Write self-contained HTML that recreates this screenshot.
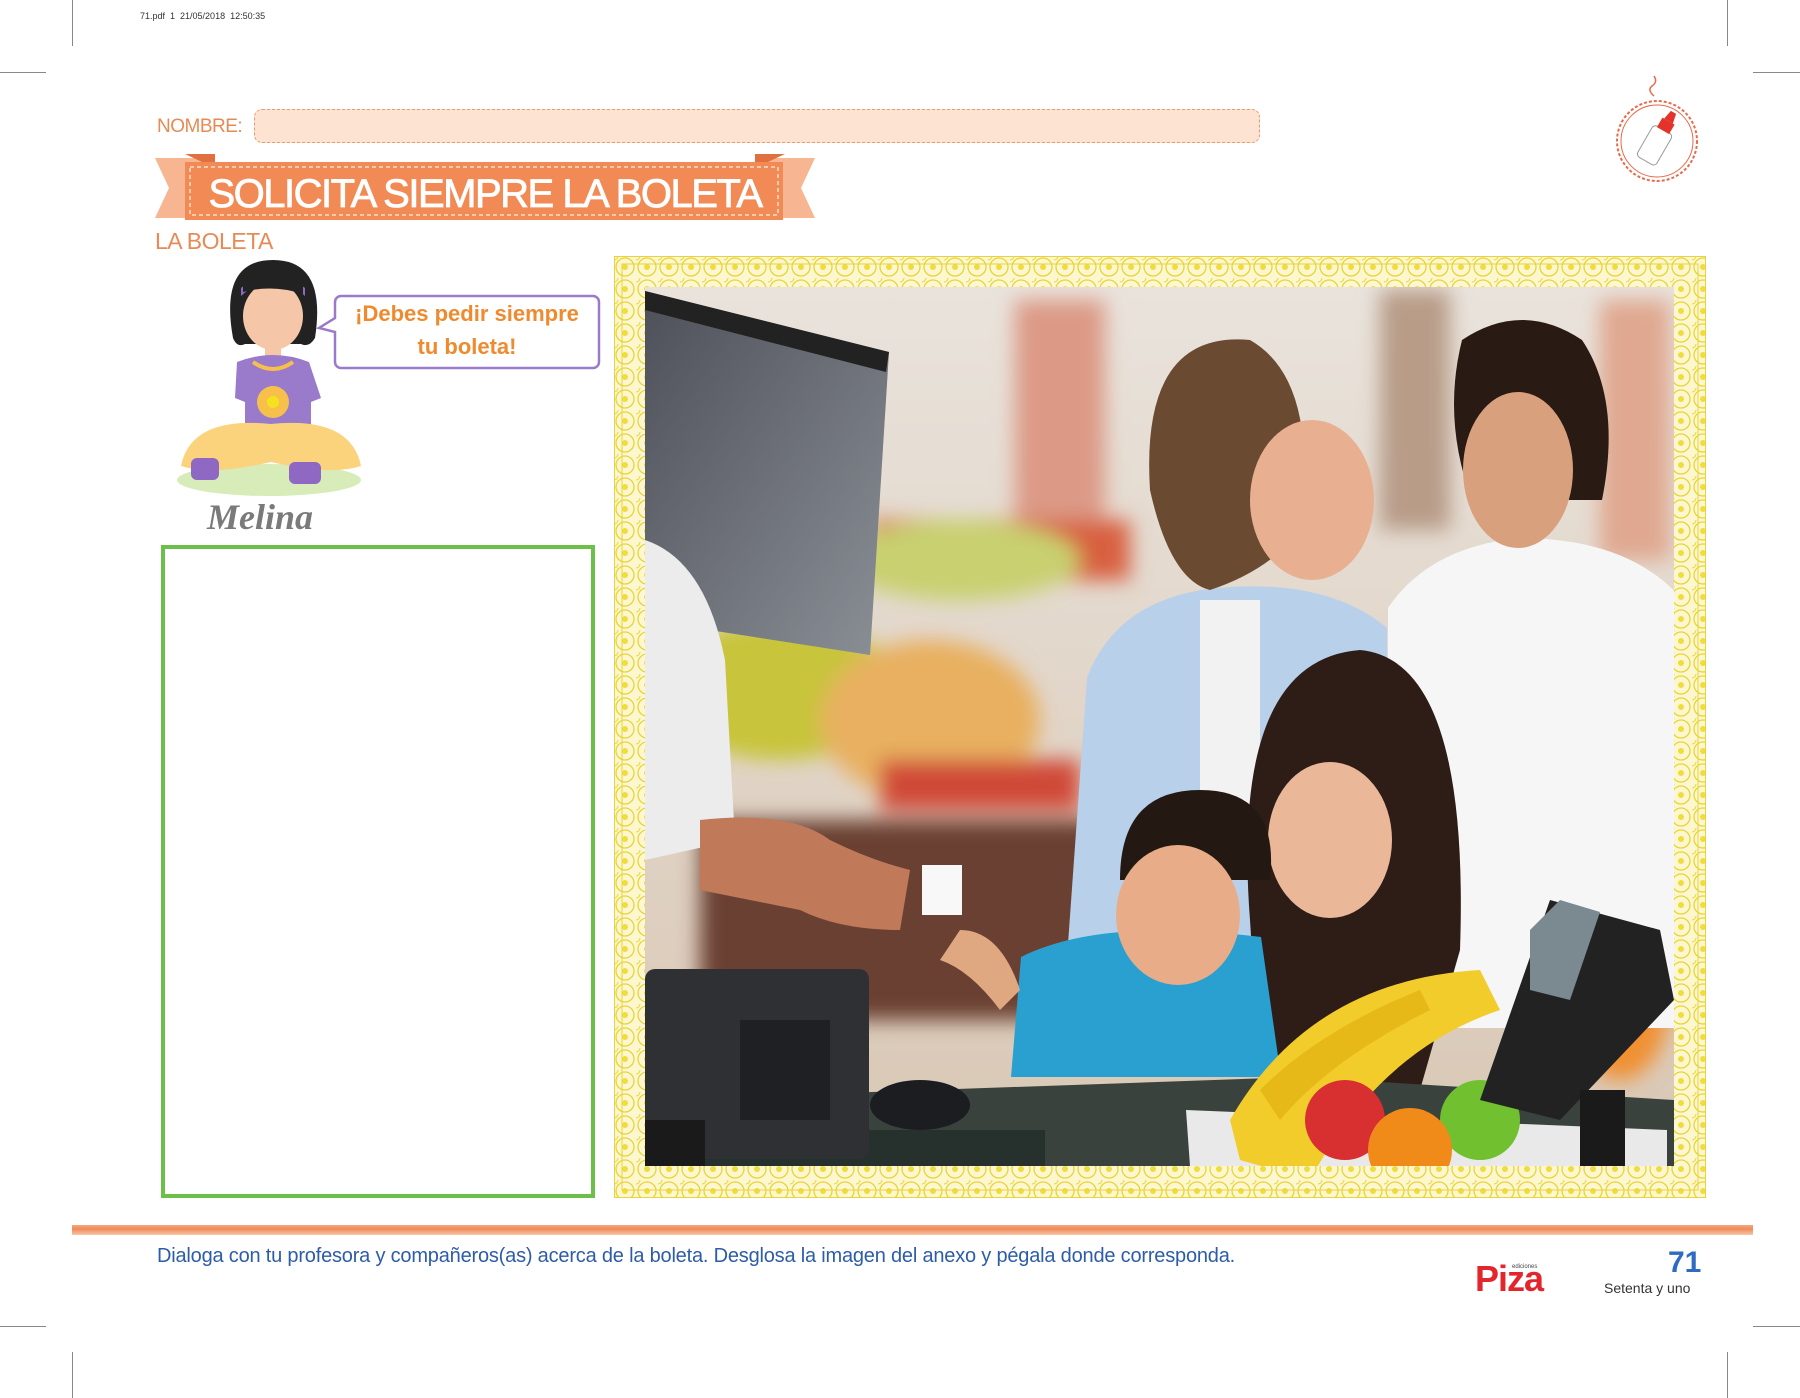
<!DOCTYPE html>
<html><head><meta charset="utf-8"><style>
*{margin:0;padding:0;box-sizing:border-box}
body{width:1800px;height:1398px;background:#fff;position:relative;overflow:hidden;font-family:"Liberation Sans","DejaVu Sans",sans-serif}
.a{position:absolute}
.cm{position:absolute;background:#888}
</style></head><body>
<div class="cm" style="left:72px;top:0;width:1px;height:46px"></div>
<div class="cm" style="left:0;top:72px;width:46px;height:1px"></div>
<div class="cm" style="left:1727px;top:0;width:1px;height:46px"></div>
<div class="cm" style="left:1753px;top:72px;width:47px;height:1px"></div>
<div class="cm" style="left:0;top:1326px;width:46px;height:1px"></div>
<div class="cm" style="left:72px;top:1352px;width:1px;height:46px"></div>
<div class="cm" style="left:1753px;top:1326px;width:47px;height:1px"></div>
<div class="cm" style="left:1727px;top:1352px;width:1px;height:46px"></div>
<div class="a" style="left:140px;top:11px;font-size:9px;color:#333">71.pdf&nbsp; 1&nbsp; 21/05/2018&nbsp; 12:50:35</div>

<div class="a" style="left:157px;top:116px;font-size:19px;color:#e88a55;letter-spacing:-0.5px">NOMBRE:</div>
<div class="a" style="left:254px;top:109px;width:1006px;height:34px;background:#fde4d2;border:1.5px dashed #eb9b6e;border-radius:8px"></div>

<svg class="a" style="left:155px;top:154px" width="660" height="68" viewBox="0 0 660 68">
<polygon points="0,0 58,0 58,60 0,60 14,30" fill="#f7b592" transform="translate(0,4)"/>
<polygon points="660,0 602,0 602,60 660,60 646,30" fill="#f7b592" transform="translate(0,4)"/>
<polygon points="30,0 60,0 60,14" fill="#e0703f"/>
<polygon points="630,0 600,0 600,14" fill="#e0703f"/>
<rect x="30" y="8" width="598" height="58" fill="#f28a55"/>
<rect x="35" y="13" width="588" height="48" fill="none" stroke="#fde0cc" stroke-width="1.5" stroke-dasharray="4 3"/>
<text x="330" y="53" text-anchor="middle" font-family="Liberation Sans, sans-serif" font-size="40" fill="#fff" stroke="#fff" stroke-width="0.8" letter-spacing="-1.5">SOLICITA SIEMPRE LA BOLETA</text>
</svg>
<div class="a" style="left:155px;top:228px;font-size:23px;color:#e88a55;letter-spacing:-0.5px">LA BOLETA</div>

<svg class="a" style="left:1610px;top:72px" width="96" height="116" viewBox="0 0 96 116">
<path d="M44 4 q4 6 -2 10 q-5 4 2 10" stroke="#e86a4a" fill="none" stroke-width="1.5"/>
<circle cx="47" cy="69" r="40" fill="#fff" stroke="#e86a4a" stroke-width="2" stroke-dasharray="3 2"/>
<circle cx="47" cy="69" r="36" fill="none" stroke="#e86a4a" stroke-width="1"/>
<g transform="rotate(30 47 69)"><rect x="36" y="56" width="22" height="36" rx="4" fill="#fff" stroke="#999"/><rect x="40" y="46" width="14" height="11" fill="#e3332a"/><polygon points="44,36 50,36 52,46 42,46" fill="#e3332a"/></g>
</svg>

<!-- girl -->
<svg class="a" style="left:161px;top:258px" width="220" height="245" viewBox="0 0 220 245">
<ellipse cx="108" cy="222" rx="92" ry="16" fill="#d7ecb8"/>
<path d="M72 80 q-14 -78 40 -78 q54 0 42 78 q-6 10 -14 6 l-56 0 q-8 4 -12 -6z" fill="#222"/>
<ellipse cx="112" cy="58" rx="30" ry="34" fill="#f6c6a8"/>
<path d="M80 38 q32 -30 64 0 l0 -8 q-32 -26 -64 0z" fill="#8e68c2"/>
<path d="M82 34 q30 -8 60 2 l0 -14 q-30 -18 -60 0z" fill="#222"/>
<path d="M104 88 l16 0 l0 16 l-16 0z" fill="#f6c6a8"/>
<path d="M76 104 q36 -14 72 0 l12 36 l-10 4 l0 50 l-66 0 l0 -50 l-10 -4z" fill="#9a7acb"/>
<path d="M92 104 q20 14 40 0" stroke="#f7c04a" stroke-width="4" fill="none"/>
<circle cx="112" cy="144" r="16" fill="#f7c04a"/><circle cx="112" cy="144" r="6" fill="#f5e11f"/>
<path d="M20 208 q10 -50 90 -42 q80 -8 90 42 q-30 10 -90 -4 q-60 14 -90 4z" fill="#fbd37d"/>
<rect x="30" y="200" width="28" height="22" rx="6" fill="#8e68c2"/>
<rect x="128" y="204" width="32" height="22" rx="6" fill="#8e68c2"/>
</svg>
<div class="a" style="left:207px;top:496px;font-family:'Liberation Serif',serif;font-style:italic;font-weight:bold;font-size:36px;color:#7a7a7a">Melina</div>
<svg class="a" style="left:316px;top:290px" width="286" height="80" viewBox="0 0 286 80">
<path d="M25 6 h252 a6 6 0 0 1 6 6 v60 a6 6 0 0 1 -6 6 h-252 a6 6 0 0 1 -6 -6 v-30 l-16 -4 l16 -10 v-16 a6 6 0 0 1 6 -6z" fill="#fff" stroke="#9b7bc9" stroke-width="2.5"/>
<text x="151" y="31" text-anchor="middle" font-family="Liberation Sans, sans-serif" font-weight="bold" font-size="22" fill="#ef8a2e">¡Debes pedir siempre</text>
<text x="151" y="64" text-anchor="middle" font-family="Liberation Sans, sans-serif" font-weight="bold" font-size="22" fill="#ef8a2e">tu boleta!</text>
</svg>

<div class="a" style="left:161px;top:545px;width:434px;height:653px;border:4px solid #6cc04a"></div>

<!-- frame -->
<svg class="a" style="left:614px;top:256px" width="1092" height="942" viewBox="0 0 1092 942">
<defs><pattern id="p" width="22" height="22" patternUnits="userSpaceOnUse">
<rect width="22" height="22" fill="#fdf7cf"/><circle cx="11" cy="11" r="9" fill="none" stroke="#e8d43a" stroke-width="1.3"/><circle cx="11" cy="11" r="3" fill="#f0dc40"/><circle cx="0" cy="0" r="4" fill="none" stroke="#e8d43a"/></pattern></defs>
<rect x="0" y="0" width="1092" height="942" fill="url(#p)" stroke="#e8d43a" stroke-width="2"/>
<rect x="8" y="8" width="1076" height="926" fill="none" stroke="#e8d43a"/>
</svg>

<!-- photo -->
<svg class="a" style="left:645px;top:287px" width="1029" height="879" viewBox="645 287 1029 879">
<defs>
<linearGradient id="bg" x1="0" y1="0" x2="0" y2="1"><stop offset="0" stop-color="#e9e3dc"/><stop offset="1" stop-color="#d9c7b4"/></linearGradient>
<linearGradient id="mon" x1="0" y1="0" x2="1" y2="1"><stop offset="0" stop-color="#4d5058"/><stop offset="1" stop-color="#8b8f96"/></linearGradient>
<filter id="bl"><feGaussianBlur stdDeviation="10"/></filter>
</defs>
<rect x="645" y="287" width="1029" height="879" fill="url(#bg)"/>
<g filter="url(#bl)">
<rect x="1015" y="300" width="90" height="260" fill="#dc9a86"/>
<rect x="1380" y="290" width="70" height="240" fill="#b89c88"/>
<rect x="1600" y="300" width="70" height="260" fill="#e0a890"/>
<rect x="870" y="520" width="260" height="60" fill="#d86040"/>
<ellipse cx="780" cy="690" rx="120" ry="70" fill="#c8c43a"/>
<ellipse cx="960" cy="560" rx="120" ry="40" fill="#c8d070"/>
<ellipse cx="930" cy="720" rx="110" ry="80" fill="#e8b060"/>
<rect x="880" y="760" width="200" height="50" fill="#d04838"/>
<rect x="700" y="820" width="400" height="200" fill="#6a4030"/>
<ellipse cx="1620" cy="1000" rx="50" ry="80" fill="#f09030"/>
</g>
<polygon points="645,291 889,352 870,655 645,620" fill="url(#mon)"/>
<polygon points="645,291 889,352 886,372 645,310" fill="#222"/>
<path d="M645 540 q60 20 80 120 l10 180 l-90 20z" fill="#ececec"/>
<path d="M700 820 q90 -10 130 20 q40 20 80 30 l-10 60 q-60 0 -100 -20 l-100 -20z" fill="#c07a5a"/>
<path d="M1067 958 l20 -280 q30 -80 130 -90 q110 -10 170 40 l0 330z" fill="#b9d0ea"/>
<path d="M1200 600 l60 0 l0 260 l-60 0z" fill="#f2f2f2"/>
<path d="M1250 340 q-110 -10 -100 150 q20 90 60 100 q60 -20 90 -60 q20 -150 -50 -190z" fill="#6a4a30"/>
<ellipse cx="1312" cy="500" rx="62" ry="80" fill="#e8b090"/>
<path d="M1388 1028 l0 -420 q40 -60 130 -70 q110 0 163 60 l0 430z" fill="#f6f6f6"/>
<path d="M1462 340 q60 -40 120 0 q40 60 20 160 l-130 0 q-30 -80 -10 -160z" fill="#2a1a14"/>
<ellipse cx="1518" cy="470" rx="55" ry="78" fill="#d8a07c"/>
<path d="M1250 920 q-20 -260 110 -270 q110 10 100 300 l-40 140 l-160 -10z" fill="#2e1c16"/>
<ellipse cx="1330" cy="840" rx="62" ry="78" fill="#eab898"/>
<path d="M1011 1077 l10 -120 q80 -40 240 -20 l20 140z" fill="#2aa0d0"/>
<path d="M1120 880 q0 -90 80 -90 q80 0 70 90 z" fill="#241812"/>
<ellipse cx="1178" cy="915" rx="62" ry="70" fill="#e8ac88"/>
<path d="M960 930 q40 0 60 60 l-20 20 q-30 -40 -60 -50z" fill="#e0a880"/>
<rect x="922" y="865" width="40" height="50" fill="#f8f8f8"/>
<polygon points="645,1100 1300,1077 1674,1100 1674,1166 645,1166" fill="#3a423e"/>
<rect x="645" y="1130" width="400" height="36" fill="#26302c"/>
<rect x="645" y="969" width="224" height="190" rx="10" fill="#2e3034"/>
<rect x="740" y="1020" width="90" height="100" fill="#1e2024"/>
<ellipse cx="920" cy="1105" rx="50" ry="25" fill="#1b1d20"/>
<rect x="645" y="1120" width="60" height="46" fill="#1a1a1a"/>
<polygon points="1186,1110 1667,1130 1667,1166 1190,1166" fill="#e9e9ea"/>
<path d="M1230 1120 q80 -140 250 -150 l20 40 q-120 40 -190 170 l-70 -20z" fill="#f2cc2a"/>
<path d="M1260 1090 q60 -60 160 -100 l10 20 q-100 50 -150 110z" fill="#e6b818"/>
<circle cx="1345" cy="1120" r="40" fill="#d83030"/>
<circle cx="1480" cy="1120" r="40" fill="#70c030"/>
<circle cx="1410" cy="1150" r="42" fill="#f08a18"/>
<polygon points="1480,1100 1550,900 1660,930 1674,1000 1560,1120" fill="#222"/>
<polygon points="1530,930 1560,900 1600,912 1570,1000 1530,990" fill="#7a8a90"/>
<rect x="1580" y="1090" width="45" height="76" fill="#1a1a1a"/>
</svg>

<div class="a" style="left:72px;top:1225px;width:1681px;height:10px;background:linear-gradient(#f6a880,#f08a58 40%,#f8c8a8)"></div>
<div class="a" style="left:157px;top:1245px;font-size:20px;color:#2d5ca8;letter-spacing:-0.2px">Dialoga con tu profesora y compañeros(as) acerca de la boleta. Desglosa la imagen del anexo y pégala donde corresponda.</div>
<div class="a" style="left:1512px;top:1264px;font-size:6px;color:#444">ediciones</div>
<div class="a" style="left:1475px;top:1258px;font-size:36px;font-weight:bold;color:#e3262d;letter-spacing:-1px">Piza</div>
<div class="a" style="left:1668px;top:1246px;font-size:30px;font-weight:bold;color:#2d6cc0">71</div>
<div class="a" style="left:1604px;top:1280px;font-size:14px;color:#333">Setenta y uno</div>
</body></html>
